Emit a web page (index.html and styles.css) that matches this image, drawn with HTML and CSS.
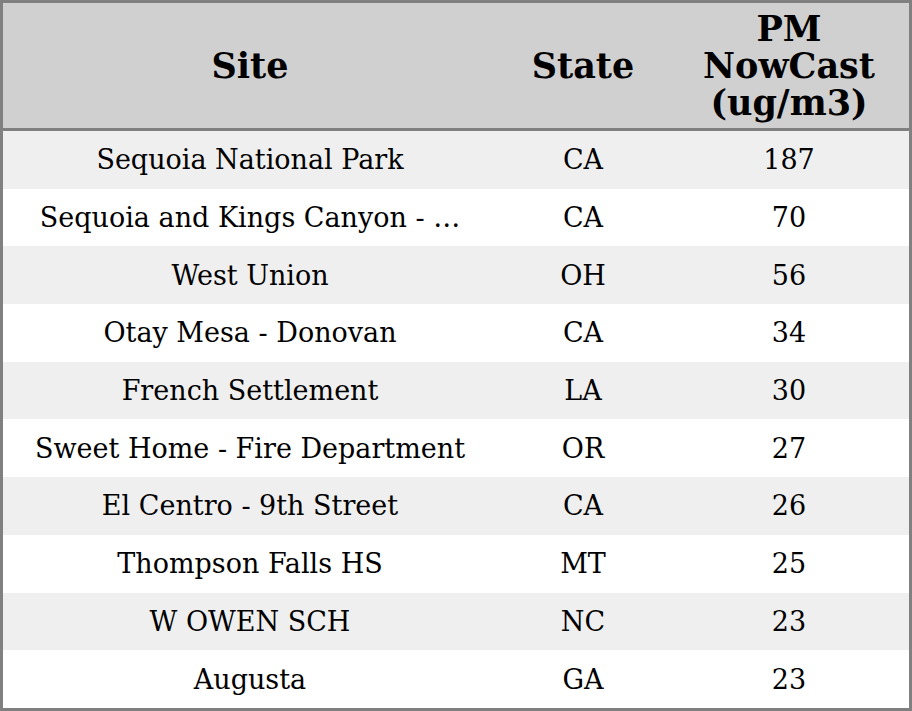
FILE: index.html
```html
<!DOCTYPE html>
<html>
<head>
<meta charset="utf-8">
<link rel="stylesheet" href="styles.css">
</head>
<body>
<table class="grid">
  <colgroup>
    <col class="c-site">
    <col class="c-state">
    <col class="c-pm">
  </colgroup>
  <thead>
    <tr class="head">
      <th>Site</th>
      <th>State</th>
      <th>PM<br>NowCast<br>(ug/m3)</th>
    </tr>
  </thead>
  <tbody>
    <tr class="row"><td>Sequoia National Park</td><td>CA</td><td>187</td></tr>
    <tr class="row"><td>Sequoia and Kings Canyon - …</td><td>CA</td><td>70</td></tr>
    <tr class="row"><td>West Union</td><td>OH</td><td>56</td></tr>
    <tr class="row"><td>Otay Mesa - Donovan</td><td>CA</td><td>34</td></tr>
    <tr class="row"><td>French Settlement</td><td>LA</td><td>30</td></tr>
    <tr class="row"><td>Sweet Home - Fire Department</td><td>OR</td><td>27</td></tr>
    <tr class="row"><td>El Centro - 9th Street</td><td>CA</td><td>26</td></tr>
    <tr class="row"><td>Thompson Falls HS</td><td>MT</td><td>25</td></tr>
    <tr class="row"><td>W OWEN SCH</td><td>NC</td><td>23</td></tr>
    <tr class="row"><td>Augusta</td><td>GA</td><td>23</td></tr>
  </tbody>
</table>
</body>
</html>
```
FILE: styles.css
```css
html, body {
  margin: 0;
  padding: 0;
  background: #ffffff;
}
.grid {
  width: 912px;
  height: 711px;
  table-layout: fixed;
  border-collapse: separate;
  border-spacing: 0;
  border: 3px solid #808080;
  font-family: "DejaVu Serif", serif;
  color: #000;
}
.c-site { width: 494px; }
.c-state { width: 172px; }
.c-pm { width: 240px; }
.head th {
  height: 125px;
  padding: 0;
  background: #d0d0d0;
  border-bottom: 3px solid #808080;
  font-size: 35px;
  line-height: 37px;
  font-weight: bold;
  text-align: center;
  vertical-align: middle;
}
.row td {
  height: 57.7px;
  padding: 0;
  font-size: 27px;
  text-align: center;
  vertical-align: middle;
  white-space: nowrap;
}
.row:nth-child(odd) td {
  background: #efefef;
}
```
